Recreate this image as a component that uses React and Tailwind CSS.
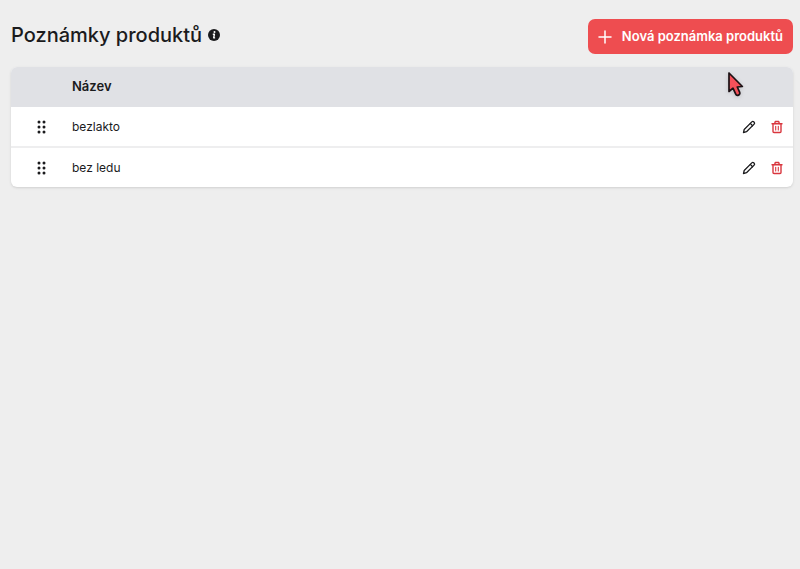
import React, { useState } from "react";

const DragIcon = () => (
    <svg viewBox="0 0 10 14" className="h-[14px] w-[10px]" fill="#1b1b1d" aria-hidden="true">
        <circle cx="2" cy="2" r="1.5" />
        <circle cx="7" cy="2" r="1.5" />
        <circle cx="2" cy="7" r="1.5" />
        <circle cx="7" cy="7" r="1.5" />
        <circle cx="2" cy="12" r="1.5" />
        <circle cx="7" cy="12" r="1.5" />
    </svg>
);

const PencilIcon = () => (
    <svg viewBox="0 0 14 14" className="size-[14px]" fill="none" stroke="#1b1b1d" strokeWidth="1.3" strokeLinecap="round" strokeLinejoin="round" aria-hidden="true">
        <path d="M1.5 12.5 2.2 9.5 9.8 1.9c.6-.6 1.4-.6 1.9-.1l.4.4c.6.6.6 1.3 0 1.9L4.500 11.700Z" />
        <path d="M8.300 3.400 10.600 5.700" />
    </svg>
);

const TrashIcon = () => (
    <svg viewBox="0 0 12 14" className="h-[14px] w-[12px]" fill="none" stroke="#d9363e" strokeWidth="1.4" strokeLinecap="round" strokeLinejoin="round" aria-hidden="true">
        <path d="M1 3.700h10" />
        <path d="M3.700 3.500 4.300 1.500h3.400l.6 2" />
        <path d="M2 3.800v7.700c0 .6.4 1 1 1h6c.6 0 1-.4 1-1V3.800" />
        <path d="M4.700 6.200v3.800M7.300 6.200v3.800" strokeWidth="1.100" />
    </svg>
);

const InfoIcon = () => (
    <svg viewBox="0 0 12 12" className="size-3" aria-hidden="true">
        <circle cx="6" cy="6" r="6" fill="#1b1b1d" />
        <circle cx="6.500" cy="2.900" r="1" fill="#fff" />
        <path d="M4.800 5.200h1.600L5.700 8.900h1.400" fill="none" stroke="#fff" strokeWidth="1.400" strokeLinejoin="round" />
    </svg>
);

const Pointer = () => (
    <svg viewBox="0 0 18 28" className="pointer-events-none absolute right-12 top-1 h-[28px] w-[18px] drop-shadow-sm" aria-hidden="true">
        <path
            d="M2 2v18.500l4-3.300 2.600 5.700c.5 1.200 1.700 1.700 2.900 1.200s1.600-1.700 1.100-2.900L10.300 16l5.100-.5Z"
            fill="#f4515a"
            stroke="#1b1114"
            strokeWidth="1.700"
            strokeLinejoin="round"
        />
    </svg>
);

const App = () => {
    const [notes, setNotes] = useState([
        { id: 1, name: "bezlakto" },
        { id: 2, name: "bez ledu" },
    ]);

    const removeNote = (id) => setNotes(notes.filter((note) => note.id !== id));

    return (
        <main className="min-h-screen bg-[#eeeeee] pl-[11px] pr-[7px] pt-[19px] font-['Inter',sans-serif] text-[#1b1b1d]">
            <header className="mb-[13px] flex items-start justify-between">
                <div className="flex items-center gap-1.5">
                    <h1 className="text-xl font-medium leading-8">Poznámky produktů</h1>
                    <button type="button" aria-label="Nápověda">
                        <InfoIcon />
                    </button>
                </div>
                <button
                    type="button"
                    className="flex h-[35px] items-center gap-2.5 rounded-[7px] bg-[#ee4d50] px-2.5 text-[13px] font-semibold text-white"
                >
                    <svg viewBox="0 0 14 14" className="size-[14px]" stroke="currentColor" strokeWidth="1.500" strokeLinecap="round" aria-hidden="true">
                        <path d="M7 1v12M1 7h12" />
                    </svg>
                    Nová poznámka produktů
                </button>
            </header>

            <div className="relative">
                <div className="overflow-hidden rounded-md bg-white shadow-sm">
                    <table className="w-full table-fixed text-left">
                        <thead>
                            <tr className="h-10 bg-[#e0e1e5] text-[13px]">
                                <th className="w-[61px]" aria-label="Pořadí"></th>
                                <th className="font-semibold">Název</th>
                                <th className="w-20" aria-label="Akce"></th>
                            </tr>
                        </thead>
                        <tbody className="text-xs">
                            {notes.map((note) => (
                                <tr key={note.id} className="h-10 border-b-2 border-[#eeeeef] last:border-b-0">
                                    <td className="pl-[26px]">
                                        <button type="button" className="block cursor-grab" aria-label="Přesunout">
                                            <DragIcon />
                                        </button>
                                    </td>
                                    <td>{note.name}</td>
                                    <td>
                                        <div className="flex items-center justify-end gap-[15px] pr-2.5">
                                            <button type="button" aria-label="Upravit">
                                                <PencilIcon />
                                            </button>
                                            <button type="button" aria-label="Smazat" onClick={() => removeNote(note.id)}>
                                                <TrashIcon />
                                            </button>
                                        </div>
                                    </td>
                                </tr>
                            ))}
                        </tbody>
                    </table>
                </div>
                <Pointer />
            </div>
        </main>
    );
};

export default App;
